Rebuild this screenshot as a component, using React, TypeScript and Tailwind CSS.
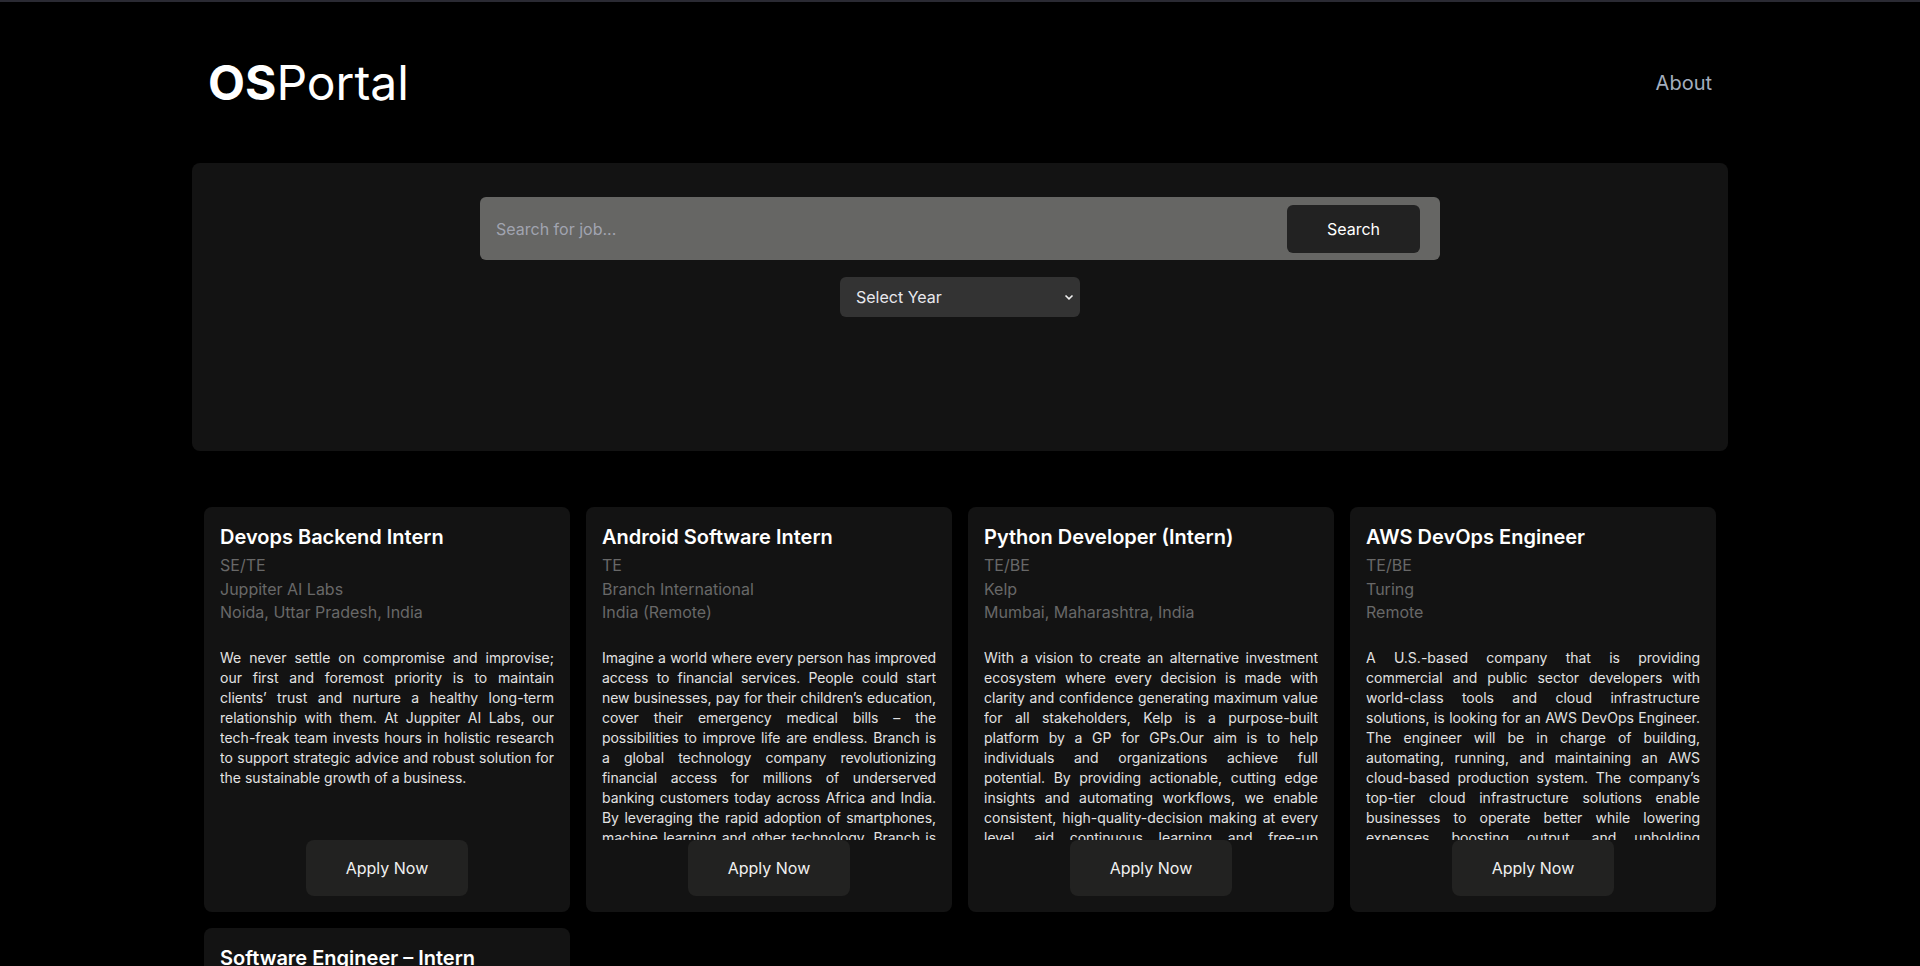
import React from "react";

type Job = {
  title: string;
  year: string;
  company: string;
  location: string;
  desc: string;
  tight?: boolean;
};

const jobs: Job[] = [
  {
    title: "Devops Backend Intern",
    year: "SE/TE",
    company: "Juppiter AI Labs",
    location: "Noida, Uttar Pradesh, India",
    desc: "We never settle on compromise and improvise; our first and foremost priority is to maintain clients’ trust and nurture a healthy long-term relationship with them. At Juppiter AI Labs, our tech-freak team invests hours in holistic research to support strategic advice and robust solution for the sustainable growth of a business.",
  },
  {
    title: "Android Software Intern",
    year: "TE",
    company: "Branch International",
    location: "India (Remote)",
    desc: "Imagine a world where every person has improved access to financial services. People could start new businesses, pay for their children’s education, cover their emergency medical bills – the possibilities to improve life are endless. Branch is a\u00a0global technology company revolutionizing financial access for millions of underserved banking customers today across Africa and India. By leveraging the rapid adoption of smartphones, machine learning and other technology, Branch is pioneering new ways to improve access and value for the next billion.",
    tight: true,
  },
  {
    title: "Python Developer (Intern)",
    year: "TE/BE",
    company: "Kelp",
    location: "Mumbai, Maharashtra, India",
    desc: "With a vision to create an alternative investment ecosystem where every decision is made with clarity and confidence generating maximum value for all stakeholders, Kelp is a purpose-built platform by a GP for GPs.Our aim is to help individuals and organizations achieve full potential. By providing actionable, cutting edge insights and automating workflows, we enable consistent, high-quality-decision making at every level, aid continuous learning and free-up bandwidth for what matters the most.",
  },
  {
    title: "AWS DevOps Engineer",
    year: "TE/BE",
    company: "Turing",
    location: "Remote",
    desc: "A U.S.-based company that is providing commercial and public sector developers with world-class tools and cloud infrastructure solutions, is looking for an AWS DevOps Engineer. The engineer will be in charge of building, automating, running, and maintaining an AWS cloud-based production system. The company’s top-tier cloud infrastructure solutions enable businesses to operate better while lowering expenses, boosting output, and upholding superior security standards.",
  },
  {
    title: "Software Engineer – Intern",
    year: "TE/BE",
    company: "Sprinklr",
    location: "Gurugram, Haryana, India",
    desc: "Sprinklr is a leading enterprise software company for all customer-facing functions. With advanced AI, Sprinklr's unified, customer experience management platform helps companies deliver human experiences to every customer, every time, across any modern channel.",
  },
];

function JobCard({ job }: { job: Job }) {
  return (
    <div className="flex flex-col rounded-lg bg-[#131313] px-4 pt-4 pb-4">
      <h2 className="text-[20px] leading-[28px] font-semibold text-white">{job.title}</h2>
      <div className="mt-[3px] text-[16px] leading-[23.5px] text-[#686868]">
        <p>{job.year}</p>
        <p>{job.company}</p>
        <p>{job.location}</p>
      </div>
      <p
        className={
          job.tight
            ? "mt-[23px] max-h-[192px] overflow-hidden text-justify text-[14px] leading-[20px] tracking-[-0.07px] text-[#e2e2e2]"
            : "mt-[23px] max-h-[192px] overflow-hidden text-justify text-[14px] leading-[20px] text-[#e2e2e2]"
        }
      >
        {job.desc}
      </p>
      <div className="mt-auto flex justify-center">
        <button className="h-14 w-[162px] rounded-lg bg-[#222221] text-[16px] text-[#f0f0f0]">
          Apply Now
        </button>
      </div>
    </div>
  );
}

export default function App() {
  return (
    <div
      className="min-h-screen border-t-2 border-[#2a2a33] bg-black text-white"
      style={{ fontFamily: "Inter, 'Noto Sans', sans-serif" }}
    >
      <div className="mx-auto w-[1536px]">
        <header className="flex h-[161px] items-center justify-between px-4">
          <div className="text-[48px] leading-none text-white">
            <span className="font-bold">OS</span>
            <span className="font-normal">Portal</span>
          </div>
          <a className="text-[20px] text-[#a3aebf]">About</a>
        </header>

        <section className="flex h-[288px] flex-col items-center rounded-lg bg-[#131313] pt-[34px]">
          <div className="flex h-[63px] w-[960px] items-center rounded-md bg-[#666664] pl-4 pr-[20px]">
            <input
              className="h-full flex-1 bg-transparent text-[16px] text-white outline-none placeholder:text-[#a1a4b0]"
              placeholder="Search for job..."
            />
            <button className="h-12 w-[133px] rounded-md bg-[#222222] text-[16px] text-white">
              Search
            </button>
          </div>
          <div className="relative mt-[17px] h-10 w-[240px]">
            <select className="h-full w-full appearance-none rounded-md bg-[#333333] pl-4 text-[16px] text-[#e8e8ee] outline-none">
              <option>Select Year</option>
            </select>
            <svg
              className="pointer-events-none absolute right-[6px] top-1/2 -translate-y-1/2"
              width="10"
              height="8"
              viewBox="0 0 10 8"
              fill="none"
            >
              <path d="M1.5 2.5 L5 5.8 L8.5 2.5" stroke="#f0f0f0" strokeWidth="1.6" />
            </svg>
          </div>
        </section>

        <main className="mt-[56px] grid grid-cols-4 gap-4 px-3 pb-10">
          {jobs.map((j) => (
            <JobCard key={j.title} job={j} />
          ))}
        </main>
      </div>
    </div>
  );
}
